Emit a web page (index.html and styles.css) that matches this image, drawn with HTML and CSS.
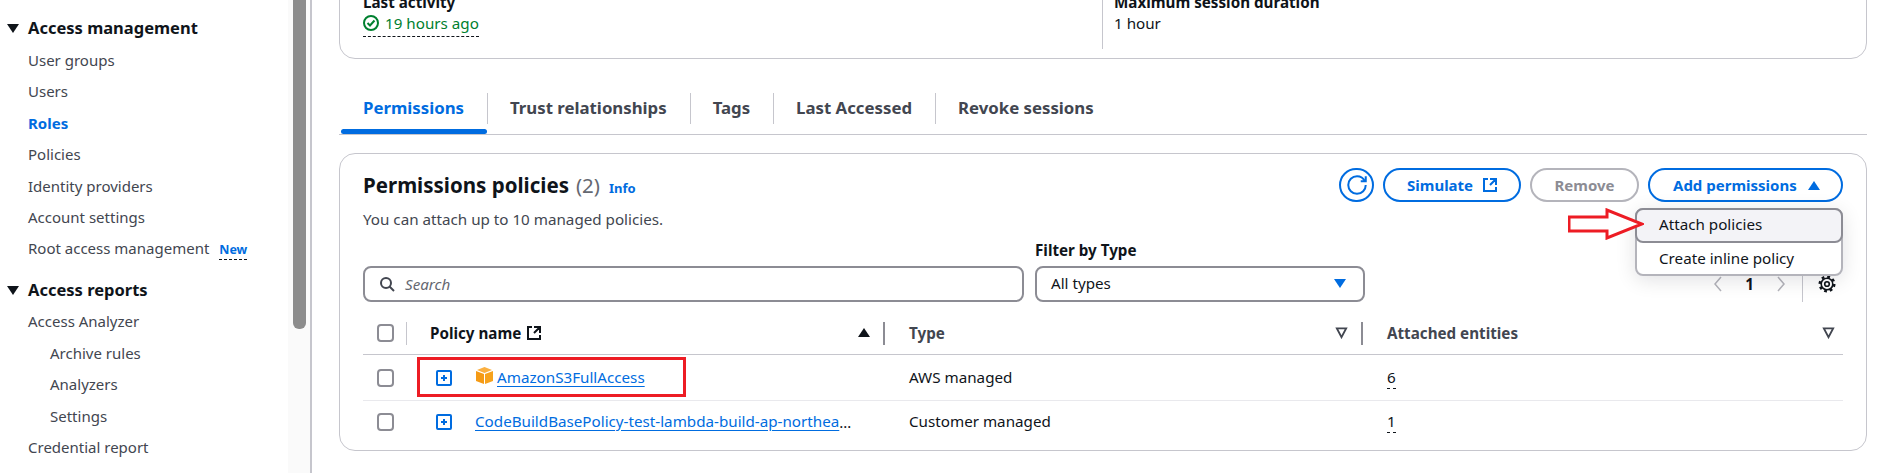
FILE: index.html
```html
<!DOCTYPE html>
<html lang="en">
<head>
  <meta charset="UTF-8">
  <title>Role permissions</title>
  <link rel="stylesheet" href="styles.css">
</head>
<body>

  <aside class="sidebar">
    <nav class="nav">
      <h3 class="nav-head first"><span class="caret"></span>Access management</h3>
      <a class="nav-item">User groups</a>
      <a class="nav-item">Users</a>
      <a class="nav-item active">Roles</a>
      <a class="nav-item">Policies</a>
      <a class="nav-item">Identity providers</a>
      <a class="nav-item">Account settings</a>
      <a class="nav-item">Root access management <span class="new">New</span></a>

      <h3 class="nav-head"><span class="caret"></span>Access reports</h3>
      <a class="nav-item">Access Analyzer</a>
      <a class="nav-item sub-item">Archive rules</a>
      <a class="nav-item sub-item">Analyzers</a>
      <a class="nav-item sub-item">Settings</a>
      <a class="nav-item">Credential report</a>
    </nav>
    <div class="scroll-track"><div class="scroll-thumb"></div></div>
  </aside>

  <main class="main">

    <section class="card summary">
      <div class="summary-col">
        <div class="label">Last activity</div>
        <div class="activity">
          <svg class="icon" viewBox="0 0 16 16"><circle cx="8" cy="8" r="7"/><path d="m4.500 8 2.500 2.500 4.500-5"/></svg>
          19 hours ago
        </div>
      </div>
      <div class="summary-col second">
        <div class="label">Maximum session duration</div>
        <div class="value">1 hour</div>
      </div>
    </section>

    <div class="tabs">
      <div class="tab active">Permissions</div>
      <div class="tab">Trust relationships</div>
      <div class="tab">Tags</div>
      <div class="tab">Last Accessed</div>
      <div class="tab last">Revoke sessions</div>
    </div>

    <section class="card policies">
      <div class="head">
        <div class="title">
          <h2>Permissions policies</h2>
          <span class="count">(2)</span>
          <a class="info">Info</a>
        </div>
        <div class="actions">
          <button class="btn round">
            <svg class="icon" viewBox="0 0 16 16"><path d="M15 8c0 3.870-3.130 7-7 7s-7-3.130-7-7 3.130-7 7-7c2.790 0 5.200 1.630 6.330 4"/><path d="M15 1v4h-4"/></svg>
          </button>
          <button class="btn simulate">Simulate
            <svg class="icon" viewBox="0 0 16 16"><path d="M14 8V2H8M14 2 8 8M6 2H2v12h12v-4"/></svg>
          </button>
          <button class="btn remove">Remove</button>
          <div class="add-wrap">
            <button class="btn add">Add permissions <span class="tri-up"></span></button>
            <div class="menu">
              <div class="menu-item hover">Attach policies</div>
              <div class="menu-item">Create inline policy</div>
            </div>
            <svg class="arrow" viewBox="0 0 76 32"><path d="M1 9h38V2l35 14-35 14v-7H1z"/></svg>
          </div>
        </div>
      </div>

      <p class="note">You can attach up to 10 managed policies.</p>

      <div class="filters">
        <div class="search">
          <svg class="icon" viewBox="0 0 16 16"><circle cx="7" cy="7" r="5"/><path d="m15 15-4.500-4.500"/></svg>
          <span>Search</span>
        </div>
        <div class="filter">
          <label>Filter by Type</label>
          <div class="select">All types <span class="tri-down"></span></div>
        </div>
        <div class="pager">
          <svg class="chev" viewBox="0 0 16 16"><path d="M11 1 5 8l6 7"/></svg>
          <span class="page">1</span>
          <svg class="chev" viewBox="0 0 16 16"><path d="m5 1 6 7-6 7"/></svg>
          <div class="gear-box">
            <svg class="gear" viewBox="0 0 18 18">
              <circle class="gear-teeth" cx="9" cy="9" r="7.300"/>
              <circle cx="9" cy="9" r="5.800"/>
              <circle cx="9" cy="9" r="2.300"/>
            </svg>
          </div>
        </div>
      </div>

      <div class="row row-head">
        <div class="cell check"><span class="box"></span></div>
        <div class="cell th first-th">
          <span class="th-name">Policy name
            <svg class="icon" viewBox="0 0 16 16"><path d="M14 8V2H8M14 2 8 8M6 2H2v12h12v-4"/></svg>
          </span>
          <span class="sort-up"></span>
        </div>
        <div class="cell th muted">Type
          <svg class="sort-down" viewBox="0 0 14 14"><path d="M2 2.500h10L7 12z"/></svg>
        </div>
        <div class="cell th muted end">Attached entities
          <svg class="sort-down" viewBox="0 0 14 14"><path d="M2 2.500h10L7 12z"/></svg>
        </div>
      </div>

      <div class="row row-one">
        <div class="cell check"><span class="box"></span></div>
        <div class="cell name">
          <svg class="plus" viewBox="0 0 16 16"><rect x="1" y="1" width="14" height="14" rx="1"/><path d="M8 5v6M5 8h6"/></svg>
          <svg class="cube" viewBox="0 0 19 19"><path class="c-left" d="M1 5l8 3v10l-8-3z"/><path class="c-right" d="M18 5 10 8v10l8-3z"/><path class="c-top" d="m9.500 1 7.500 3-7.500 3L2 4z"/></svg>
          <a class="link">AmazonS3FullAccess</a>
        </div>
        <div class="cell text">AWS managed</div>
        <div class="cell text"><span class="dashed">6</span></div>
        <div class="red-box"></div>
      </div>

      <div class="row row-two">
        <div class="cell check"><span class="box"></span></div>
        <div class="cell name">
          <svg class="plus" viewBox="0 0 16 16"><rect x="1" y="1" width="14" height="14" rx="1"/><path d="M8 5v6M5 8h6"/></svg>
          <span class="truncate"><a class="link">CodeBuildBasePolicy-test-lambda-build-ap-northeast-1</a></span>
        </div>
        <div class="cell text">Customer managed</div>
        <div class="cell text"><span class="dashed">1</span></div>
      </div>
    </section>

  </main>

</body>
</html>
```

FILE: styles.css
```css
* {
  box-sizing: border-box;
}

html, body {
  height: 473px;
}

body {
  margin: 0;
  display: flex;
  overflow: hidden;
  background: #fff;
  color: #0f141a;
  font-family: "Noto Sans", sans-serif;
  font-size: 15.2px;
  line-height: 20px;
}

.icon {
  width: 16px;
  height: 16px;
  fill: none;
  stroke: currentColor;
  stroke-width: 2;
  flex: none;
}

/* sidebar */
.sidebar {
  width: 312px;
  flex: none;
  display: flex;
  border-right: 2px solid #c6c6cd;
}

.nav {
  width: 288px;
  padding-left: 28px;
  font-size: 15px;
}

.nav-head {
  position: relative;
  margin: 0;
  padding-top: 13px;
  height: 41.6px;
  font-size: 16.500px;
  line-height: 24px;
  font-weight: 700;
}

.nav-head.first {
  height: 45px;
  padding-top: 16px;
}

.caret {
  position: absolute;
  left: -21px;
  top: 21px;
  border-left: 6px solid transparent;
  border-right: 6px solid transparent;
  border-top: 9px solid #0f141a;
}

.first .caret {
  top: 24px;
}

.nav-item {
  display: block;
  height: 31.4px;
  line-height: 31.4px;
  color: #424650;
}

.nav-item.active {
  color: #006ce0;
  font-weight: 700;
}

.sub-item {
  padding-left: 22px;
}

.new {
  margin-left: 6px;
  color: #006ce0;
  font-size: 12.500px;
  font-weight: 700;
  border-bottom: 1px dashed #0f141a;
  padding-bottom: 1px;
}

.scroll-track {
  flex: 1;
  background: #fafafa;
  padding-left: 5px;
}

.scroll-thumb {
  width: 13px;
  height: 329px;
  background: #8c8c8c;
  border-radius: 0 0 6px 6px;
}

/* main */
.main {
  flex: 1;
  padding: 0 18px 0 27px;
  margin-top: -30px;
}

.card {
  background: #fff;
  border: 1px solid #c6c6cd;
  border-radius: 16px;
}

.summary {
  display: flex;
  height: 89px;
  padding: 21px 23px 0;
}

.summary-col {
  width: 740px;
  height: 57px;
  border-right: 1px solid #c6c6cd;
}

.summary-col.second {
  border: none;
  padding-left: 11px;
}

.label {
  font-weight: 700;
}

.value {
  margin-top: 1px;
}

.activity {
  display: inline-flex;
  align-items: center;
  gap: 6px;
  margin-top: 1px;
  padding-bottom: 3px;
  color: #00802f;
  border-bottom: 1px dashed #0f141a;
}

/* tabs */
.tabs {
  display: flex;
  height: 42px;
  margin-top: 34px;
  padding-left: 2px;
  border-bottom: 1px solid #c6c6cd;
}

.tab {
  position: relative;
  height: 31px;
  padding: 0 23px 0 22px;
  border-right: 1px solid #c6c6cd;
  color: #424650;
  font-size: 16.800px;
  line-height: 30px;
  font-weight: 700;
}

.tab.last {
  border: none;
}

.tab.active {
  color: #006ce0;
}

.tab.active::after {
  content: "";
  position: absolute;
  left: 0;
  right: 0;
  top: 36px;
  height: 5px;
  background: #006ce0;
  border-radius: 3px;
}

/* policies card */
.policies {
  margin-top: 18px;
  height: 298px;
  padding: 14px 23px 0 23px;
}

.head {
  display: flex;
  justify-content: space-between;
  height: 34px;
}

.title {
  display: flex;
  align-items: baseline;
  gap: 7px;
  padding-top: 3px;
}

.title h2 {
  margin: 0;
  font-size: 20.500px;
  line-height: 28px;
  font-weight: 700;
}

.count {
  font-size: 20.500px;
  color: #656871;
}

.info {
  margin-left: 2px;
  color: #006ce0;
  font-size: 13px;
  font-weight: 700;
}

.actions {
  display: flex;
  gap: 9px;
}

.btn {
  height: 34px;
  padding: 0 22px;
  background: #fff;
  border: 2px solid #006ce0;
  border-radius: 17px;
  color: #006ce0;
  font: 700 15px "Noto Sans", sans-serif;
  display: flex;
  align-items: center;
}

.btn.round {
  width: 35px;
  padding: 0;
  justify-content: center;
}

.btn.round .icon {
  width: 20px;
  height: 20px;
  stroke-width: 1.6;
}

.simulate {
  width: 138px;
  gap: 9px;
}

.remove {
  width: 109px;
  justify-content: center;
  padding: 0;
  border-color: #b4b4bb;
  color: #8c8c94;
}

.add-wrap {
  position: relative;
}

.add {
  width: 195px;
  padding: 0 21px 0 23px;
  justify-content: space-between;
}

.tri-up {
  border-left: 6px solid transparent;
  border-right: 6px solid transparent;
  border-bottom: 9px solid #006ce0;
}

.menu {
  position: absolute;
  right: 0;
  top: 40px;
  width: 208px;
  height: 68px;
  background: #fff;
  border: 2px solid #b4b4bb;
  border-radius: 8px;
  box-shadow: 0 4px 20px rgba(0, 7, 22, 0.12);
  z-index: 2;
}

.menu-item {
  height: 33px;
  padding-left: 22px;
  line-height: 31px;
}

.menu-item.hover {
  margin: -2px -2px 0;
  height: 35px;
  padding-left: 22px;
  line-height: 29px;
  background: #f3f3f7;
  border: 2px solid #8c8c94;
  border-radius: 8px;
}

.arrow {
  position: absolute;
  left: -80px;
  top: 40px;
  width: 76px;
  height: 32px;
  fill: #fff;
  stroke: #ed1c24;
  stroke-width: 3;
  z-index: 3;
}

.note {
  margin: 7px 0 0;
  color: #424650;
}

.filters {
  display: flex;
  align-items: flex-end;
  margin-top: 11px;
}

.search {
  display: flex;
  align-items: center;
  gap: 10px;
  width: 661px;
  height: 36px;
  padding-left: 14px;
  border: 2px solid #8c8c94;
  border-radius: 8px;
  color: #656871;
  font-style: italic;
}

.search .icon {
  color: #424650;
}

.filter {
  margin-left: 11px;
}

.filter label {
  display: block;
  font-weight: 700;
  margin-bottom: 6px;
}

.select {
  display: flex;
  justify-content: space-between;
  align-items: center;
  width: 330px;
  height: 36px;
  padding: 0 17px 2px 14px;
  border: 2px solid #8c8c94;
  border-radius: 8px;
}

.tri-down {
  border-left: 6px solid transparent;
  border-right: 6px solid transparent;
  border-top: 9px solid #006ce0;
}

.pager {
  flex: 1;
  display: flex;
  justify-content: flex-end;
  align-items: center;
  height: 36px;
}

.chev {
  width: 16px;
  height: 16px;
  fill: none;
  stroke: #b4b4bb;
  stroke-width: 1.500;
}

.page {
  width: 47px;
  text-align: center;
  font-weight: 700;
}

.gear-box {
  display: flex;
  justify-content: flex-end;
  align-items: center;
  width: 41px;
  height: 36px;
  margin-left: 13px;
  padding-right: 7px;
  border-left: 1px solid #c6c6cd;
}

.gear {
  width: 18px;
  height: 18px;
  fill: none;
  stroke: #0f141a;
  stroke-width: 1.600;
}

.gear .gear-teeth {
  stroke-width: 2.400;
  stroke-dasharray: 2.800 2.930;
}

/* table */
.row {
  position: relative;
  display: grid;
  grid-template-columns: 44px 478px 478px 1fr;
  align-items: center;
}

.row-head {
  height: 43px;
  margin-top: 10px;
  border-bottom: 1px solid #c6c6cd;
  font-weight: 700;
}

.row-one {
  height: 46px;
  border-bottom: 1px solid #e9e9ed;
}

.row-two {
  height: 41px;
}

.cell {
  padding-left: 24px;
}

.cell.text {
  padding-bottom: 2px;
}

.check {
  padding-left: 14px;
  display: flex;
  align-items: center;
  height: 23px;
}

.row-head .check {
  border-right: 1px solid #c6c6cd;
}

.box {
  width: 17px;
  height: 18px;
  border: 2px solid #8c8c94;
  border-radius: 4px;
}

.th {
  display: flex;
  justify-content: space-between;
  align-items: center;
  height: 23px;
  padding-right: 13px;
  padding-bottom: 1px;
  border-right: 2px solid #8c8c94;
}

.th.muted {
  color: #424650;
}

.th.end {
  border: none;
  padding-right: 8px;
}

.first-th {
  padding-left: 23px;
}

.th-name {
  display: flex;
  align-items: center;
  gap: 5px;
}

.sort-up {
  border-left: 6px solid transparent;
  border-right: 6px solid transparent;
  border-bottom: 9px solid #0f141a;
}

.sort-down {
  width: 13px;
  height: 13px;
  fill: #fff;
  stroke: #424650;
  stroke-width: 2;
}

.name {
  display: flex;
  align-items: center;
  padding-left: 29px;
}

.plus {
  width: 16px;
  height: 16px;
  flex: none;
  fill: none;
  stroke: #006ce0;
  stroke-width: 2;
}

.cube {
  width: 19px;
  height: 19px;
  margin: -4px 3px 0 23px;
}

.c-left {
  fill: #f59a14;
}

.c-right {
  fill: #f7a21c;
}

.c-top {
  fill: #fbb040;
}

.link {
  color: #006ce0;
  text-decoration: underline;
  text-underline-offset: 3px;
  position: relative;
  top: -1px;
}

.truncate {
  display: block;
  width: 382px;
  margin-left: 23px;
  overflow: hidden;
  white-space: nowrap;
  text-overflow: ellipsis;
}

.dashed {
  border-bottom: 1px dashed #0f141a;
  padding-bottom: 1px;
}

.red-box {
  position: absolute;
  left: 54px;
  top: 2px;
  width: 269px;
  height: 40px;
  border: 3px solid #ed1c24;
}
```
